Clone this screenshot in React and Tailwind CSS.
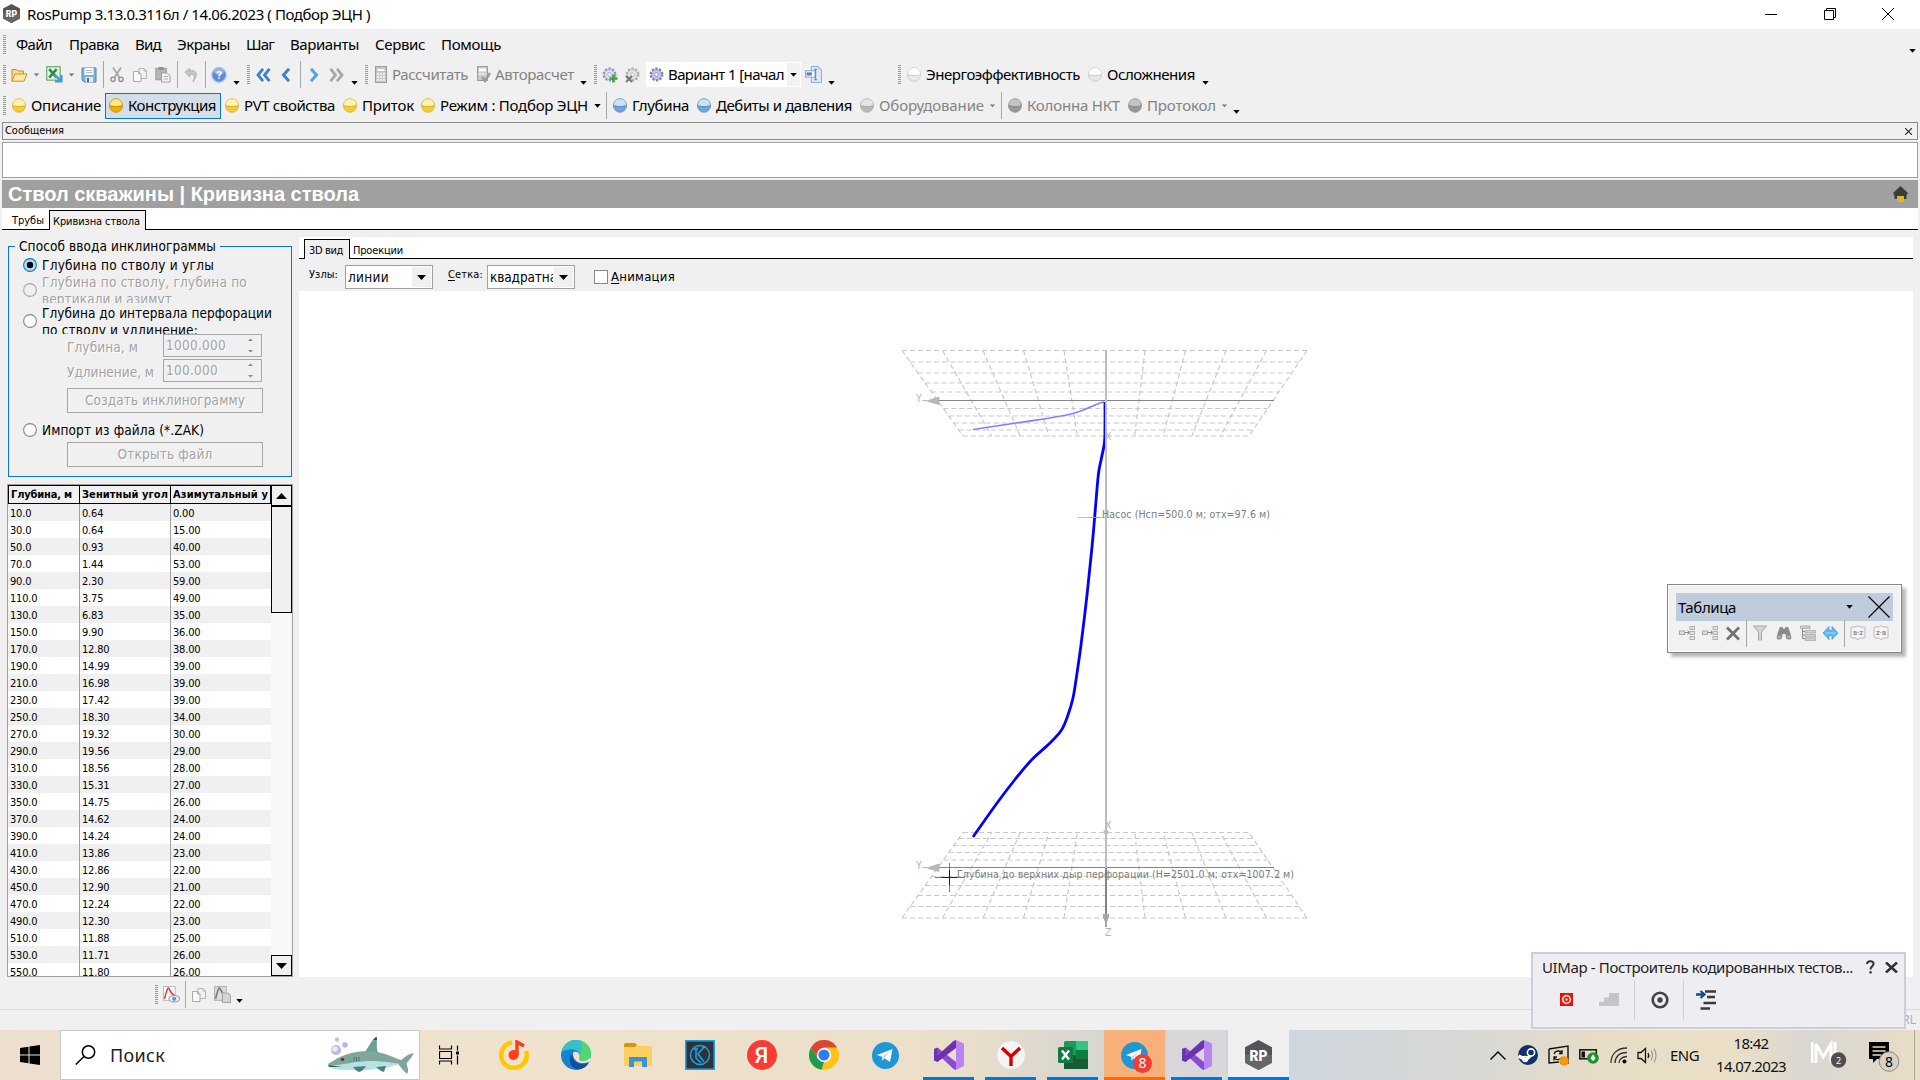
import React, { useLayoutEffect, useRef } from "react";

const UI = "font-['Noto_Sans','Open_Sans',sans-serif] text-[15px]";
const TAHOMA = "font-['DejaVu_Sans_Condensed','DejaVu_Sans',sans-serif]";

/* Text label whose tracking is adjusted so that it fills the width of its box. */
function Fit({ className = "", children }) {
  const outer = useRef(null);
  const inner = useRef(null);
  useLayoutEffect(() => {
    const el = inner.current;
    el.style.letterSpacing = "0px";
    const n = el.textContent.length;
    const spare = outer.current.clientWidth - el.getBoundingClientRect().width;
    el.style.letterSpacing = (spare / n).toFixed(3) + "px";
  });
  return (
    <span ref={outer} className={"block shrink-0 whitespace-nowrap " + className}>
      <span ref={inner} className="inline-block">{children}</span>
    </span>
  );
}

function Icon({ className = "", box = "0 0 16 16", children }) {
  return (
    <svg className={"block shrink-0 " + className} viewBox={box} fill="none">
      {children}
    </svg>
  );
}

const Grip = ({ className = "" }) => (
  <Icon className={"h-[20px] w-[3px] " + className} box="0 0 3 20">
    <path d="M1.5 0V20" stroke="#9a9a9a" strokeWidth="3" strokeDasharray="1 1" />
  </Icon>
);
const Sep = ({ className = "" }) => <div className={"h-[27px] w-px shrink-0 bg-[#a6a6a6] " + className} />;
const Arrow = ({ className = "" }) => (
  <Icon className={"h-[4px] w-[7px] " + className} box="0 0 7 4">
    <path d="M0.3 0H6.7L3.5 3.7Z" fill="currentColor" />
  </Icon>
);

const BALLS = {
  gold: ["#fff3b0", "#f3cb3c", "#d9a927"],
  dark: ["#ffe680", "#eeb100", "#b98700"],
  blue: ["#cfe3f8", "#6fa6de", "#5486bd"],
  gray: ["#e6e6e6", "#b9b9b9", "#a8a8a8"],
  deep: ["#c4c4c4", "#979797", "#8a8a8a"],
  white: ["#ffffff", "#e9e9e9", "#c4c4c4"],
};
function Ball({ tone, className = "" }) {
  const [a, b, c] = BALLS[tone];
  return (
    <Icon className={"h-[15px] w-[14px] " + className} box="0 0 14 15">
      <ellipse cx="7" cy="7.5" rx="6.5" ry="6.8" fill={b} stroke={c} strokeWidth="0.8" />
      <path d="M1 7.2C1 3 3.8 1.2 7 1.2S13 3 13 7.2C9 8.6 5 8.6 1 7.2Z" fill={a} />
      <path d="M1.2 7.6C5 9 9 9 12.8 7.6" stroke={c} strokeWidth="0.8" />
    </Icon>
  );
}

const Logo = ({ className }) => (
  <Icon className={className} box="0 0 27 30">
    <path d="M13.5 0L27 7.2V22.8L13.5 30L0 22.8V7.2Z" fill="#555" />
    <path d="M0 15H27V22.8L13.5 30L0 22.8Z" fill="#666" />
    <text x="13.5" y="20.5" textAnchor="middle" fontFamily="Roboto, sans-serif" fontWeight="900" fontSize="15.5" textLength="18" lengthAdjust="spacingAndGlyphs" fill="#fff">RP</text>
  </Icon>
);

function Gear({ className = "", color = "#8f93c4", light = "#dcdef2", badge }) {
  return (
    <Icon className={"h-[16px] w-[16px] " + className}>
      <circle cx="7.5" cy="7.5" r="5.8" stroke={color} strokeWidth="2.4" strokeDasharray="2.2 1.45" />
      <circle cx="7.5" cy="7.5" r="5" fill={light} stroke={color} strokeWidth="0.7" />
      <circle cx="7.5" cy="7.5" r="1.8" fill="#fff" stroke={color} strokeWidth="0.7" />
      {badge === "plus" && <path d="M11.5 7.5V15.5M7.5 11.5H15.5" stroke="#3fa535" strokeWidth="2.6" />}
      {badge === "x" && <path d="M1 9L7 15M7 9L1 15" stroke="#777" strokeWidth="2" />}
    </Icon>
  );
}

const Copy = ({ className = "" }) => (
  <Icon className={"h-[16px] w-[16px] " + className}>
    <path d="M7 1.5H12L14.5 4V11.5H7Z" fill="#f2f2f2" stroke="#b4b4b4" />
    <path d="M1.5 4.5H6.5L9 7V14.5H1.5Z" fill="#fafafa" stroke="#a8a8a8" />
    <path d="M6.5 4.5V7H9M12 1.5V4H14.5" stroke="#b4b4b4" />
  </Icon>
);

const Calc = ({ className = "" }) => (
  <Icon className={"h-[17px] w-[14px] " + className} box="0 0 14 17">
    <rect x="1.5" y="0.5" width="11" height="16" fill="#c9c9c9" stroke="#9c9c9c" />
    <rect x="3" y="2.5" width="8" height="3" fill="#fff" stroke="#aaa" strokeWidth="0.6" />
    <path d="M3.2 8H11M3.2 11H11M3.2 14H11" stroke="#fff" strokeWidth="1.7" strokeDasharray="1.8 1.1" />
  </Icon>
);

function TitleBar() {
  return (
    <div className={"flex h-[29px] items-center bg-white pb-[2px] text-black " + UI}>
      <Logo className="ml-[3px] h-[19px] w-[17px]" />
      <Fit className="ml-[7px] w-[343px] leading-[20px]">RosPump 3.13.0.3116л / 14.06.2023 ( Подбор ЭЦН )</Fit>
      <div className="flex-1" />
      <Icon className="h-[12px] w-[12px]" box="0 0 12 12"><path d="M0 6.5H12" stroke="#000" /></Icon>
      <Icon className="ml-[47px] h-[12px] w-[12px]" box="0 0 12 12"><path d="M0.5 2.5H9.5V11.5H0.5ZM2.5 2.5V0.5H11.5V9.5H9.5" stroke="#000" /></Icon>
      <Icon className="mr-[26px] ml-[46px] h-[12px] w-[12px]" box="0 0 12 12"><path d="M0 0L12 12M12 0L0 12" stroke="#000" /></Icon>
    </div>
  );
}

function MenuBar() {
  return (
    <div className={"flex h-[31px] items-center " + UI}>
      <Grip className="ml-[3px]" />
      <Fit className="ml-[10px] w-[36px]">Файл</Fit>
      <Fit className="ml-[17px] w-[50px]">Правка</Fit>
      <Fit className="ml-[16px] w-[26px]">Вид</Fit>
      <Fit className="ml-[16px] w-[53px]">Экраны</Fit>
      <Fit className="ml-[16px] w-[28px]">Шаг</Fit>
      <Fit className="ml-[16px] w-[69px]">Варианты</Fit>
      <Fit className="ml-[16px] w-[50px]">Сервис</Fit>
      <Fit className="ml-[16px] w-[60px]">Помощь</Fit>
      <Arrow className="mt-[13px] mr-[4px] ml-auto" />
    </div>
  );
}

function ToolRow() {
  return (
    <div className={"flex h-[29px] items-center " + UI}>
      <Grip className="ml-[3px]" />
      <Icon className="ml-[5px] h-[16px] w-[17px]">
        <path d="M0.5 14V2.5H5L6.5 4H12V7" fill="#f8dd86" stroke="#c39335" />
        <path d="M0.5 14.2L3.5 7H15.5L12.5 14.2Z" fill="#ffe9a3" stroke="#c39335" />
      </Icon>
      <Arrow className="ml-[5px] scale-90 text-[#777]" />
      <Icon className="ml-[6px] h-[17px] w-[17px]">
        <rect x="0.7" y="0.7" width="12.6" height="12.6" fill="#eaf5e8" stroke="#5c9a5c" />
        <path d="M3 3L10 11M10 3L3 11" stroke="#2e8b45" strokeWidth="2.4" />
        <path d="M8 8L13 13M14.5 8.5V14.5H8.5" stroke="#3d9be0" strokeWidth="2.2" />
      </Icon>
      <Arrow className="ml-[5px] scale-90 text-[#777]" />
      <Icon className="ml-[6px] h-[16px] w-[16px]">
        <path d="M1 1H15V15H3L1 13Z" fill="#7fb0e2" stroke="#5b83b4" />
        <rect x="3.5" y="1" width="9" height="7" fill="#f6f9fd" />
        <path d="M5 3.5H11M5 5.5H11" stroke="#b4bccb" />
        <rect x="4.5" y="10" width="7.5" height="5" fill="#e6eaf0" />
        <rect x="6" y="11" width="2" height="4" fill="#4c6d97" />
      </Icon>
      <Sep className="ml-[6px]" />
      <Icon className="ml-[5px] h-[17px] w-[16px]">
        <path d="M4 1L10.5 11M12 1L5.5 11" stroke="#a8a8a8" strokeWidth="1.8" />
        <circle cx="4" cy="12.8" r="2.1" stroke="#959595" strokeWidth="1.5" />
        <circle cx="12" cy="12.8" r="2.1" stroke="#959595" strokeWidth="1.5" />
      </Icon>
      <Copy className="ml-[7px]" />
      <Icon className="ml-[7px] h-[17px] w-[16px]">
        <rect x="0.8" y="1.8" width="10.5" height="11.5" fill="#b5b5b5" stroke="#9c9c9c" />
        <rect x="3.5" y="0.5" width="5" height="3" fill="#8f8f8f" />
        <path d="M6.5 6.5H12L15 9V15.5H6.5Z" fill="#f5f5f5" stroke="#a0a0a0" />
        <path d="M8.5 10H13M8.5 12.5H13" stroke="#b0b0b0" />
      </Icon>
      <Sep className="ml-[6px]" />
      <Icon className="ml-[6px] h-[16px] w-[15px]">
        <path d="M1 5L6 1V3.5C13 2 16 7 9.5 15.5C12.5 9.5 11 6.5 6 7.5V10Z" fill="#c6c6c6" stroke="#a6a6a6" strokeWidth="0.8" />
      </Icon>
      <Sep className="ml-[6px]" />
      <Icon className="ml-[5px] h-[16px] w-[16px]">
        <circle cx="8" cy="8" r="7.2" fill="#5f86dc" stroke="#a9bfe8" strokeWidth="1.4" />
        <ellipse cx="8" cy="4.8" rx="5" ry="3" fill="#94b0ee" />
        <text x="8" y="12" textAnchor="middle" fontFamily="Roboto, sans-serif" fontWeight="700" fontSize="11.5" fill="#fff">?</text>
      </Icon>
      <Arrow className="mt-[17px] ml-[6px]" />
      <Grip className="ml-[7px]" />
      <Icon className="ml-[6px] h-[14px] w-[15px]" box="0 0 15 14">
        <path d="M7 0.8L2 7L7 13.2M13.5 0.8L8.5 7L13.5 13.2" stroke="#3b82cf" strokeWidth="2.8" />
      </Icon>
      <Icon className="ml-[9px] h-[14px] w-[12px]" box="0 0 12 14"><path d="M9 0.8L3.5 7L9 13.2" stroke="#3b82cf" strokeWidth="3" /></Icon>
      <Sep className="ml-[8px]" />
      <Icon className="ml-[8px] h-[14px] w-[12px]" box="0 0 12 14"><path d="M2 0.8L7.5 7L2 13.2" stroke="#57a0e0" strokeWidth="3" /></Icon>
      <Icon className="ml-[8px] h-[14px] w-[15px]" box="0 0 15 14">
        <path d="M1.5 0.8L6.5 7L1.5 13.2M8 0.8L13 7L8 13.2" stroke="#a8a8a8" strokeWidth="2.8" />
      </Icon>
      <Arrow className="mt-[17px] ml-[7px]" />
      <Grip className="ml-[7px]" />
      <Calc className="ml-[6px]" />
      <Fit className="ml-[4px] w-[76px] text-[#838383]">Рассчитать</Fit>
      <Icon className="ml-[8px] h-[17px] w-[15px]" box="0 0 15 17">
        <rect x="1.5" y="0.5" width="10" height="14" fill="#c9c9c9" stroke="#9c9c9c" />
        <rect x="3" y="2.5" width="7" height="3" fill="#fff" />
        <path d="M3.2 8H10" stroke="#fff" strokeWidth="1.7" strokeDasharray="1.8 1" />
        <path d="M6 11L9 15L14 7" stroke="#9a9a9a" strokeWidth="2.4" />
      </Icon>
      <Fit className="ml-[4px] w-[79px] text-[#838383]">Авторасчет</Fit>
      <Arrow className="mt-[17px] ml-[6px]" />
      <Grip className="ml-[7px]" />
      <Gear className="ml-[5px]" badge="plus" />
      <Gear className="ml-[7px]" color="#aaa" light="#e2e2e2" badge="x" />
      <div className="ml-[5px] flex h-[25px] w-[155px] shrink-0 items-center bg-white">
        <Gear className="ml-[3px]" color="#7a7db8" light="#c3c6e6" />
        <Fit className="ml-[3px] w-[116px]">Вариант 1 [начал</Fit>
        <div className="ml-[3px] flex h-[23px] w-[13px] items-center justify-center bg-[#f2f2f2]">
          <Arrow />
        </div>
      </div>
      <Icon className="ml-[4px] h-[17px] w-[17px]">
        <path d="M6 0.5H12L15.5 4V15.5H6Z" fill="#dce9f7" stroke="#8fb3d8" />
        <rect x="0.5" y="4.5" width="9" height="6" fill="#fff" stroke="#8aa4c4" />
        <rect x="1.5" y="6" width="5" height="3" fill="#5b7fd0" />
        <path d="M10 3V13M8.500 3H11.5M8.500 13H11.5" stroke="#6f86a5" />
      </Icon>
      <Arrow className="mt-[17px] ml-[6px]" />
      <Grip className="ml-[63px]" />
      <Ball tone="white" className="ml-[6px]" />
      <Fit className="ml-[5px] w-[154px]">Энергоэффективность</Fit>
      <Ball tone="white" className="ml-[8px]" />
      <Fit className="ml-[5px] w-[88px]">Осложнения</Fit>
      <Arrow className="mt-[17px] ml-[7px]" />
    </div>
  );
}

function StepRow() {
  return (
    <div className={"flex h-[33px] items-center " + UI}>
      <Grip className="ml-[3px]" />
      <Ball tone="gold" className="ml-[6px]" />
      <Fit className="ml-[5px] w-[70px]">Описание</Fit>
      <div className="ml-[4px] flex h-[26px] w-[116px] shrink-0 items-center border border-[#0078d7] bg-[#d4dee8]">
        <Ball tone="dark" className="ml-[3px]" />
        <Fit className="ml-[5px] w-[88px]">Конструкция</Fit>
      </div>
      <Ball tone="gold" className="ml-[4px]" />
      <Fit className="ml-[5px] w-[91px]">PVT свойства</Fit>
      <Ball tone="gold" className="ml-[8px]" />
      <Fit className="ml-[5px] w-[52px]">Приток</Fit>
      <Ball tone="gold" className="ml-[7px]" />
      <Fit className="ml-[5px] w-[148px]">Режим : Подбор ЭЦН</Fit>
      <Arrow className="ml-[6px]" />
      <Sep className="ml-[5px]" />
      <Ball tone="blue" className="ml-[6px]" />
      <Fit className="ml-[5px] w-[57px]">Глубина</Fit>
      <Ball tone="blue" className="ml-[8px]" />
      <Fit className="ml-[5px] w-[136px]">Дебиты и давления</Fit>
      <Ball tone="gray" className="ml-[8px]" />
      <Fit className="ml-[5px] w-[105px] text-[#838383]">Оборудование</Fit>
      <Arrow className="ml-[5px] scale-90 text-[#838383]" />
      <Sep className="ml-[5px]" />
      <Ball tone="deep" className="ml-[6px]" />
      <Fit className="ml-[5px] w-[93px] text-[#838383]">Колонна НКТ</Fit>
      <Ball tone="deep" className="ml-[8px]" />
      <Fit className="ml-[5px] w-[69px] text-[#838383]">Протокол</Fit>
      <Arrow className="ml-[5px] scale-90 text-[#838383]" />
      <Arrow className="mt-[13px] ml-[5px]" />
    </div>
  );
}

function Messages() {
  return (
    <>
      <div className={"mx-[2px] flex h-[18px] items-center border border-[#8c8c8c] text-[11px] " + TAHOMA}>
        <Fit className="ml-[2px] w-[59px] pt-px">Сообщения</Fit>
        <Icon className="mr-[5px] ml-auto h-[7px] w-[7px]" box="0 0 7 7"><path d="M0 0L7 7M7 0L0 7" stroke="#222" strokeWidth="1.1" /></Icon>
      </div>
      <div className="mx-[2px] mt-[2px] h-[36px] border border-[#a0a0a0] bg-white" />
      <div className="mx-[2px] mt-[2px] flex h-[28px] items-center bg-[#a0a0a0] font-['Liberation_Sans',sans-serif] text-[20px] font-bold text-white">
        <Fit className="ml-[6px] w-[351px]">Ствол скважины | Кривизна ствола</Fit>
        <Icon className="mr-[10px] ml-auto h-[16px] w-[15px]" box="0 0 15 16">
          <path d="M7.5 0L15 7L13 10H2L0 7Z" fill="#3c3c3c" />
          <path d="M3 10L7.500 6L12 10L7.500 14Z" fill="#3c3c3c" />
          <rect x="4" y="10" width="7" height="6" fill="#e6b422" />
          <rect x="1.500" y="9" width="2.500" height="4" fill="#3c3c3c" />
          <rect x="11" y="9" width="2.500" height="4" fill="#3c3c3c" />
        </Icon>
      </div>
    </>
  );
}

function PageTabs() {
  return (
    <div className={"mx-[2px] flex h-[22px] items-end bg-white text-[11px] " + TAHOMA}>
      <div className="flex h-full w-[47px] shrink-0 items-center border-b border-black pt-[6px]">
        <Fit className="ml-[10px] w-[32px]">Трубы</Fit>
      </div>
      <div className="flex h-[20px] w-[97px] shrink-0 items-center border border-b-0 border-black bg-[#f0f0f0] pt-[4px]">
        <Fit className="ml-[3px] w-[87px]">Кривизна ствола</Fit>
      </div>
      <div className="h-full flex-1 border-b border-black" />
    </div>
  );
}

function Radio({ on, off, className = "" }) {
  return (
    <Icon className={"h-[14px] w-[14px] " + className} box="0 0 14 14">
      <circle cx="7" cy="7" r="6.4" fill={on ? "#b9dcf8" : off ? "#f0f0f0" : "#fff"} stroke={on ? "#0078d7" : off ? "#a8a8a8" : "#888"} strokeWidth="1.1" />
      {on && <circle cx="7" cy="7" r="3.2" fill="#000" />}
    </Icon>
  );
}

const OFF = "text-[#a3a3a3] [text-shadow:1px_1px_0_#fff]";

function NumberField({ value, width }) {
  return (
    <div className="flex h-[23px] w-[99px] items-center border border-[#a6a6a6]">
      <Fit className={"ml-[2px] " + width}>{value}</Fit>
      <Icon className="mr-[8px] ml-auto h-[15px] w-[5px]" box="0 0 5 15">
        <path d="M0 3L2.5 0.5L5 3ZM0 12L2.5 14.5L5 12Z" fill="#8a8a8a" />
      </Icon>
    </div>
  );
}

function InputMethod() {
  return (
    <fieldset className={"ml-[8px] h-[240px] w-[284px] border border-[#0078d7] text-[13.5px] " + TAHOMA}>
      <legend className="ml-[6px] h-[18px] px-[4px] leading-[18px]"><Fit className="w-[197px]">Способ ввода инклинограммы</Fit></legend>
      <div className="flex h-[19px] items-center">
        <Radio on className="ml-[14px]" />
        <Fit className="ml-[5px] w-[172px] pt-px">Глубина по стволу и углы</Fit>
      </div>
      <div className={"flex h-[29px] items-start overflow-hidden leading-[17px] " + OFF}>
        <Radio off className="mt-[9px] ml-[14px]" />
        <div className="ml-[5px]">
          <Fit className="w-[205px]">Глубина по стволу, глубина по</Fit>
          <Fit className="w-[130px]">вертикали и азимут</Fit>
        </div>
      </div>
      <div className="mt-px flex h-[30px] items-start overflow-hidden leading-[17px]">
        <Radio className="mt-[10px] ml-[14px]" />
        <div className="ml-[5px] pt-px">
          <Fit className="w-[230px]">Глубина до интервала перфорации</Fit>
          <Fit className="w-[156px]">по стволу и удлинение:</Fit>
        </div>
      </div>
      <div className={"flex h-[23px] items-center " + OFF}>
        <Fit className="ml-[58px] w-[71px] pt-[3px]">Глубина, м</Fit>
        <div className="ml-[25px]"><NumberField value="1000.000" width="w-[60px]" /></div>
      </div>
      <div className={"mt-[2px] flex h-[23px] items-center " + OFF}>
        <Fit className="ml-[58px] w-[87px] pt-[3px]">Удлинение, м</Fit>
        <div className="ml-[9px]"><NumberField value="100.000" width="w-[52px]" /></div>
      </div>
      <div className={"mt-[6px] ml-[58px] flex h-[25px] w-[196px] items-center justify-center border border-[#a6a6a6] " + OFF}>
        <Fit className="w-[160px]">Создать инклинограмму</Fit>
      </div>
      <div className="mt-[8px] flex h-[18px] items-center">
        <Radio className="ml-[14px]" />
        <Fit className="ml-[5px] w-[162px]">Импорт из файла (*.ZAK)</Fit>
      </div>
      <div className={"mt-[3px] ml-[58px] flex h-[25px] w-[196px] items-center justify-center border border-[#a6a6a6] " + OFF}>
        <Fit className="w-[95px]">Открыть файл</Fit>
      </div>
    </fieldset>
  );
}

const ROWS = [
  ["10.0", "0.64", "0.00"], ["30.0", "0.64", "15.00"], ["50.0", "0.93", "40.00"], ["70.0", "1.44", "53.00"],
  ["90.0", "2.30", "59.00"], ["110.0", "3.75", "49.00"], ["130.0", "6.83", "35.00"], ["150.0", "9.90", "36.00"],
  ["170.0", "12.80", "38.00"], ["190.0", "14.99", "39.00"], ["210.0", "16.98", "39.00"], ["230.0", "17.42", "39.00"],
  ["250.0", "18.30", "34.00"], ["270.0", "19.32", "30.00"], ["290.0", "19.56", "29.00"], ["310.0", "18.56", "28.00"],
  ["330.0", "15.31", "27.00"], ["350.0", "14.75", "26.00"], ["370.0", "14.62", "24.00"], ["390.0", "14.24", "24.00"],
  ["410.0", "13.86", "23.00"], ["430.0", "12.86", "22.00"], ["450.0", "12.90", "21.00"], ["470.0", "12.24", "22.00"],
  ["490.0", "12.30", "23.00"], ["510.0", "11.88", "25.00"], ["530.0", "11.71", "26.00"], ["550.0", "11.80", "26.00"],
];

function DepthTable() {
  return (
    <div className={"mt-[7px] ml-[7px] flex h-[493px] w-[286px] overflow-hidden border border-[#a0a0a0] bg-white text-[11px] " + TAHOMA}>
      <div className="w-[263px] shrink-0">
        <div className="flex h-[19px] items-center border border-black bg-[#f0f0f0] font-bold">
          <div className="flex h-full w-[71px] items-center border-r border-black pt-[2px]"><Fit className="ml-[2px] w-[61px]">Глубина, м</Fit></div>
          <div className="flex h-full w-[91px] items-center border-r border-black pt-[2px]"><Fit className="ml-[2px] w-[86px]">Зенитный угол</Fit></div>
          <Fit className="ml-[2px] w-[95px] pt-[2px]">Азимутальный у</Fit>
        </div>
        {ROWS.map((r, i) => (
          <div key={r[0]} className={"flex h-[17px] leading-[20px] tracking-[-0.2px] " + (i % 2 ? "bg-white" : "bg-[#f0f0f0]")}>
            <div className="w-[72px] border-r border-[#a0a0a0] pl-[2px]">{r[0]}</div>
            <div className="w-[91px] border-r border-[#a0a0a0] pl-[2px]">{r[1]}</div>
            <div className="w-[100px] pl-[2px]">{r[2]}</div>
          </div>
        ))}
      </div>
      <div className="flex w-[21px] flex-col bg-[#f8f8f8]">
        <div className="flex h-[21px] items-center justify-center border border-black bg-[#f0f0f0]">
          <Icon className="h-[6px] w-[11px]" box="0 0 11 6"><path d="M0 6L5.5 0L11 6Z" fill="#000" /></Icon>
        </div>
        <div className="h-[107px] border border-black bg-[#f0f0f0]" />
        <div className="mt-auto flex h-[21px] items-center justify-center border border-black bg-[#f0f0f0]">
          <Icon className="h-[6px] w-[11px]" box="0 0 11 6"><path d="M0 0L5.5 6L11 0Z" fill="#000" /></Icon>
        </div>
      </div>
    </div>
  );
}

function Combo({ children, className = "" }) {
  return (
    <div className={"flex h-[24px] w-[88px] shrink-0 items-center border border-[#a0a0a0] bg-white text-[13.5px] " + className}>
      {children}
      <div className="mr-px ml-auto flex h-[20px] w-[19px] items-center justify-center bg-[#f0f0f0]">
        <Icon className="h-[5px] w-[9px]" box="0 0 9 5"><path d="M0 0L4.5 5L9 0Z" fill="#000" /></Icon>
      </div>
    </div>
  );
}

const GRID_Y = [350.5, 362, 373, 383, 392, 408.5, 416, 423, 430, 436];
const GRID_K = [0, 1, 2, 3, 4, 6, 7, 8, 9, 10];

function Grid({ flip }) {
  const fy = (y) => (flip ? 1268.5 - y : y);
  return (
    <g stroke="#c9c9c9" strokeWidth="1.2" strokeDasharray="5 3">
      {GRID_Y.map((y) => {
        const t = (y - 350.5) / 85.5;
        return <path key={y} d={`M${902 + 61 * t} ${fy(y)}H${1307 - 58 * t}`} />;
      })}
      {GRID_K.map((k) => (
        <path key={k} d={`M${902 + 40.5 * k} ${fy(350.5)}L${963 + 28.6 * k} ${fy(436)}`} />
      ))}
    </g>
  );
}

/* Well path stations in screen space, drawn as a smooth curve through each. */
const WELL = [
  [1105, 402], [1105, 425], [1104.5, 442], [1101.5, 458], [1098.3, 475], [1094.7, 517], [1091.7, 550],
  [1087, 595], [1081, 645], [1076, 680], [1073, 698], [1068, 715], [1061.5, 730], [1050, 743],
  [1031.5, 760], [1015, 779.5], [996.7, 803.5], [973, 837],
];
const smooth = (p) => {
  let d = `M${p[0][0]} ${p[0][1]}`;
  for (let i = 0; i < p.length - 1; i++) {
    const a = p[i - 1] || p[i];
    const b = p[i];
    const c = p[i + 1];
    const e = p[i + 2] || c;
    d += `C${b[0] + (c[0] - a[0]) / 6} ${b[1] + (c[1] - a[1]) / 6} ${c[0] - (e[0] - b[0]) / 6} ${c[1] - (e[1] - b[1]) / 6} ${c[0]} ${c[1]}`;
  }
  return d;
};

function Trajectory() {
  return (
    <svg className="block h-[686px] w-[1614px] bg-white" viewBox="299 291 1614 686" fill="none" fontFamily="'DejaVu Sans Condensed','DejaVu Sans',sans-serif" fontSize="10.5">
      <Grid />
      <Grid flip />
      <path d="M938 400.5H1274M938 867.5H1274" stroke="#858585" />
      <path d="M1104 402C1096 403 1090 409 1073 413.5C1055 418 1035 420 1016 423L973 429.5" stroke="#8080ff" strokeWidth="1.7" />
      <path d={smooth(WELL)} stroke="#0000ff" strokeWidth="2.8" />
      <path d="M1106 350V925" stroke="#bdbdbd" strokeWidth="2" />
      <path d="M1106 868V915" stroke="#858585" strokeWidth="2" />
      <path d="M922 400.5H928L939 397V404.5L928 401.5M922 867.5H928L939 864V871.5L928 868.5" fill="#b8b8b8" stroke="#aaa" strokeWidth="0.6" />
      <path d="M1103 914H1109V917L1107 922V927H1105V922L1103 917Z" fill="#a6a6a6" />
      <circle cx="1106" cy="832" r="2.5" fill="#bdbdbd" />
      <g fill="#b4b4b4">
        <text x="916" y="402">Y</text>
        <text x="916" y="869">Y</text>
        <text x="1105" y="440">X</text>
        <text x="1105" y="829">X</text>
        <text x="1105" y="936">Z</text>
      </g>
      <path d="M1078 517.5H1111" stroke="#f7b27a" />
      <path d="M1090 517.5H1100" stroke="#ff8020" />
      <path d="M935 877.5H965M949.5 863V892" stroke="#777" />
      <path d="M942 877.5H957M949.5 870V885" stroke="#222" />
      <g fill="#7c7c7c">
        <text x="1102" y="518" textLength="168">Насос (Нсп=500.0 м; отх=97.6 м)</text>
        <text x="957" y="878" textLength="337">Глубина до верхних дыр перфорации (Н=2501.0 м; отх=1007.2 м)</text>
      </g>
    </svg>
  );
}

function ViewPanel() {
  return (
    <div className={"w-[1614px] pt-[7px] text-[11px] " + TAHOMA}>
      <div className="flex h-[22px] items-end bg-white">
        <div className="h-full w-[5px] border-b border-black" />
        <div className="flex h-[20px] w-[46px] items-center border border-b-0 border-black bg-[#f0f0f0] pt-[4px]">
          <Fit className="ml-[4px] w-[34px]">3D вид</Fit>
        </div>
        <div className="flex h-full flex-1 items-center border-b border-black pt-[7px]">
          <Fit className="ml-[3px] w-[50px]">Проекции</Fit>
        </div>
      </div>
      <div className="flex h-[32px] items-center pt-[4px]">
        <Fit className="ml-[10px] w-[29px] pb-[3px]">Узлы:</Fit>
        <Combo className="ml-[7px]"><Fit className="ml-[2px] w-[41px]">линии</Fit></Combo>
        <Fit className="ml-[15px] w-[35px] pb-[3px]"><span className="underline underline-offset-2">С</span>етка:</Fit>
        <Combo className="ml-[4px]">
          <div className="ml-[2px] w-[63px] overflow-hidden"><Fit className="w-[67px]">квадратна</Fit></div>
        </Combo>
        <div className="ml-[19px] h-[14px] w-[14px] border border-[#888] bg-white" />
        <Fit className="ml-[3px] w-[64px] text-[13px]"><span className="underline underline-offset-2">А</span>нимация</Fit>
      </div>
      <Trajectory />
    </div>
  );
}

function BottomBar() {
  return (
    <>
      <div className="flex h-[33px] items-center border-b border-[#d9d9d9] pt-[3px]">
        <Grip className="ml-[155px] h-[15px]" />
        <Icon className="ml-[5px] h-[17px] w-[17px]">
          <rect x="0.5" y="0.5" width="11" height="13" fill="#fff" stroke="#bbb" />
          <path d="M1.5 12C4 1 5 1 6 3S8 8 11 9" stroke="#e8343a" strokeWidth="1.4" />
          <ellipse cx="10.5" cy="12" rx="5" ry="3" fill="#e8f2fb" stroke="#8e9eaa" />
          <circle cx="10.5" cy="12" r="2" fill="#5b9ad6" />
        </Icon>
        <Sep className="ml-[5px] h-[22px]" />
        <Copy className="ml-[5px]" />
        <Icon className="ml-[7px] h-[17px] w-[17px]">
          <rect x="0.5" y="0.5" width="11" height="13" fill="#dcdcdc" stroke="#b0b0b0" />
          <path d="M1.5 12C4 1 5 1 6 3S8 8 11 9" stroke="#777" strokeWidth="1.4" />
          <path d="M8 6.5H13L15.5 9V15.5H8Z" fill="#d5d5d5" stroke="#a6a6a6" />
        </Icon>
        <Arrow className="mt-[13px] ml-[5px]" />
      </div>
      <div className={"flex h-[20px] items-center justify-end pr-[4px] text-[#aab] " + UI}>
        <span className="text-[12px]">RL</span>
      </div>
    </>
  );
}

function TableWindow() {
  return (
    <div className="absolute top-[584px] left-[1667px] h-[69px] w-[235px] border border-[#858585] bg-[#f1f1f1] px-[8px] pt-[8px] shadow-[4px_4px_3px_rgba(0,0,0,0.28),inset_0_0_0_1px_#fff]">
      <div className={"flex h-[28px] items-center bg-[#bfccdb] " + UI}>
        <Fit className="ml-[2px] w-[58px]">Таблица</Fit>
        <Arrow className="ml-[110px]" />
        <Icon className="ml-[15px] h-[22px] w-[22px]" box="0 0 22 22"><path d="M0.5 0.5L21.5 21.5M21.5 0.5L0.5 21.5" stroke="#000" strokeWidth="1.2" /></Icon>
      </div>
      <div className="flex h-[24px] items-center">
        {[0, 1].map((k) => (
          <Icon key={k} className={"h-[16px] w-[16px] " + (k ? "ml-[7px]" : "ml-[3px]")}>
            <rect x="0.5" y="6" width="5" height="3.5" fill="#e0e0e0" stroke="#a8a8a8" />
            <path d="M6 7.5H10M8.5 5.5L10.5 7.5L8.5 9.5" stroke="#888" />
            <rect x="11" y="1.5" width="4.5" height="3" fill="#e2e2e2" stroke="#b0b0b0" />
            <rect x="11" y="6.5" width="4.5" height="3" fill="#e2e2e2" stroke="#b0b0b0" />
            <rect x="11" y="11.5" width="4.5" height="3" fill="#e2e2e2" stroke="#b0b0b0" />
          </Icon>
        ))}
        <Icon className="ml-[7px] h-[17px] w-[16px]"><path d="M2 2L14 14M14 2L2 14" stroke="#707070" strokeWidth="2.6" /></Icon>
        <Sep className="ml-[5px] h-[22px]" />
        <Icon className="ml-[6px] h-[16px] w-[14px]" box="0 0 14 16"><path d="M0.5 1H13.5L8.5 7V15H5.5V7Z" fill="#d4d4d4" stroke="#a5a5a5" /></Icon>
        <Icon className="ml-[9px] h-[16px] w-[16px]">
          <path d="M4 2H6.5L7.5 4H8.5L9.5 2H12L14 7L15.5 13Q15 14.5 13 14.5Q11 14.5 10 13L9.5 9H6.500L6 13Q5 14.5 3 14.5Q1 14.5 0.5 13L2 7Z" fill="#8b8b8b" />
          <path d="M1.500 12.500Q3 10.500 5 12.500M11 12.500Q13 10.500 14.500 12.500" stroke="#ddd" />
        </Icon>
        <Icon className="ml-[8px] h-[16px] w-[16px]">
          <path d="M2.500 3V13.500H5M2.500 6.500H5M2.500 10H5" stroke="#888" />
          <path d="M0.500 1H10V3.500H0.500ZM5 5.500H15.500V8H5ZM5 9.500H15.500V12H5ZM5 13H15.500V15.500H5Z" fill="#d0d0d0" stroke="#a0a0a0" strokeWidth="0.7" />
        </Icon>
        <Icon className="ml-[6px] h-[16px] w-[17px]">
          <path d="M0.500 8L6.500 1.500V5.500H9.500V1.500L15.500 8L9.500 14.500V10.500H6.500V14.500Z" fill="#5fb8ee" stroke="#4a9cd6" strokeWidth="0.8" />
          <path d="M3 8H13" stroke="#a5dcfa" />
        </Icon>
        <Sep className="ml-[5px] h-[22px]" />
        {["a·z", "z·a"].map((s, i) => (
          <Icon key={s} className={"h-[16px] w-[16px] " + (i ? "ml-[7px]" : "ml-[5px]")}>
            <path d="M1 3Q1 2 2 2H6L8 0.500L10 2H14Q15 2 15 3V12Q15 13 14 13H10L8 15L6 13H2Q1 13 1 12Z" fill="#f4f4f4" stroke="#b8b8b8" />
            <text x="8" y="10" textAnchor="middle" fontFamily="Roboto, sans-serif" fontWeight="700" fontSize="7.5" fill="#8c8c8c">{s}</text>
          </Icon>
        ))}
      </div>
    </div>
  );
}

function TestBuilder() {
  return (
    <div className="absolute top-[952px] left-[1531px] h-[77px] w-[375px] border-2 border-[#cccedb] bg-[#eeeef2]">
      <div className={"flex h-[26px] items-center text-[#1e1e1e] " + UI}>
        <Fit className="ml-[9px] w-[311px]">UIMap - Построитель кодированных тестов...</Fit>
        <Icon className="ml-[13px] h-[14px] w-[9px]" box="0 0 9 14">
          <path d="M1 4C1.3 0 8 0.5 7.5 4.2C7.2 6.200 4.5 6.5 4.5 9.5" stroke="#333" strokeWidth="2" />
          <rect x="3.4" y="11.2" width="2.3" height="2.3" fill="#333" />
        </Icon>
        <Icon className="ml-[10px] h-[11px] w-[13px]" box="0 0 13 11"><path d="M1 0.5L12 10.5M12 0.5L1 10.5" stroke="#333" strokeWidth="2.6" /></Icon>
      </div>
      <div className="flex h-[40px] items-center pb-px">
        <Icon className="ml-[27px] h-[13px] w-[13px]" box="0 0 13 13"><rect width="13" height="13" fill="#e51400" /><circle cx="6.5" cy="6.5" r="3.8" stroke="#f6d5d5" strokeWidth="1.8" /><circle cx="6.5" cy="6.5" r="1.3" fill="#f6d5d5" /></Icon>
        <Icon className="ml-[26px] h-[13px] w-[20px]" box="0 0 20 13"><path d="M0 9H5V4.5H10V0H20V13H0Z" fill="#c5c5c8" /></Icon>
        <div className="ml-[15px] h-[40px] w-px bg-[#cccedb]" />
        <Icon className="ml-[16px] h-[18px] w-[18px]" box="0 0 18 18"><circle cx="9" cy="9" r="7.3" stroke="#424242" strokeWidth="2.6" /><circle cx="9" cy="9" r="2.7" fill="#424242" /></Icon>
        <div className="ml-[14px] h-[40px] w-px bg-[#cccedb]" />
        <Icon className="ml-[12px] h-[20px] w-[20px]" box="0 0 20 20">
          <path d="M9 1.5H20M11 7H19M7.5 13H20M4.5 18.5H14" stroke="#3a3a3a" strokeWidth="2.4" />
          <path d="M0 4.500H8M4.500 1L8.500 4.500L4.500 8" stroke="#00539c" strokeWidth="2.3" />
        </Icon>
      </div>
    </div>
  );
}

const Telegram = ({ className = "" }) => (
  <Icon className={"h-[27px] w-[27px] " + className} box="0 0 27 27">
    <circle cx="13.5" cy="13.5" r="13.5" fill="#1f97d4" />
    <path d="M5 13L20.5 7L18 20L12.5 16.2L10.5 18.5L10 14.8Z" fill="#fff" />
    <path d="M10 14.8L17.5 9.5L12.5 16.2L10.5 18.5Z" fill="#c5dff0" />
  </Icon>
);
const Studio = ({ className = "" }) => (
  <Icon className={"h-[30px] w-[30px] " + className} box="0 0 30 30">
    <path d="M0 9L3.5 7.5L22 22V30L19.5 29L3.5 14V21.5L0 20.5Z" fill="#8a4bd0" />
    <path d="M0 20.5L3.5 22L22 8V0L19.5 1L3.5 15.5V8L0 9Z" fill="#6c33af" />
    <path d="M22 0L30 3.5V26L22 30Z" fill="#b784f2" />
  </Icon>
);

function Shark() {
  return (
    <Icon className="h-[38px] w-[87px]" box="0 0 87 38">
      <circle cx="8" cy="14" r="5" fill="#bcb4e6" /><circle cx="7" cy="13" r="2.8" fill="#dff0fb" />
      <circle cx="9" cy="3.5" r="2.2" fill="#b9c9ee" /><circle cx="17" cy="9" r="2.8" fill="#b9b5e8" />
      <path d="M36 17C41 11 44 3 48.5 1C50 7 47 12 51 18Z" fill="#6c9f98" />
      <path d="M45 4L48.5 0.5L49 4Z" fill="#2c4c52" />
      <path d="M0 28C12 20 24 15 40 15C54 15 66 22 73 24C77 21 80 18 86 17C83 23 79 26 78.5 28C80 32 81 35 79 38C75 35 73 31 70 28C56 33 38 34 22 33C12 33 3 33 0 28Z" fill="#7fa59c" />
      <path d="M1 30C14 29 28 25 42 25C56 25 64 27 71 27.5C58 33 38 35 22 34C12 34 4 34 1 30Z" fill="#b5e3e2" />
      <path d="M25 31L38 30C36 33 33 36 31 36C28 35 27 33 25 31ZM48 31L58 30L56 36L53 35Z" fill="#4e7f80" />
      <path d="M0 29L14 31L1 31Z" fill="#3a5d62" />
      <circle cx="14.5" cy="23.5" r="1.8" fill="#742d3c" />
      <path d="M26 21V25M28.5 21V25M31 21V25" stroke="#4d7777" />
    </Icon>
  );
}

function Taskbar() {
  return (
    <div className={"flex h-[50px] items-center bg-[linear-gradient(90deg,#ecdfcd_0px,#efe3ce_500px,#ecdfca_950px,#dcd8ce_1050px,#d2d4d8_1160px,#cfd6de_1300px,#d8d8d4_1480px,#e7ddc6_1600px,#ebe0c6_1730px,#d9d7d2_1810px,#e0dacc_1870px,#eadec2_1920px)] " + UI}>
      <Icon className="ml-[20px] h-[20px] w-[20px]" box="0 0 20 20"><path d="M0 3L8.5 1.8V9.5H0ZM9.5 1.6L20 0V9.5H9.5ZM0 10.5H8.5V18.2L0 17ZM9.5 10.5H20V20L9.500 18.400Z" fill="#000" /></Icon>
      <div className="ml-[20px] flex h-[50px] w-[360px] shrink-0 items-center border border-[#c8c8c8] bg-white">
        <Icon className="ml-[14px] h-[20px] w-[21px]" box="0 0 21 20"><circle cx="13.5" cy="7" r="6.2" stroke="#000" strokeWidth="1.5" /><path d="M9 11.500L0.800 19.500" stroke="#000" strokeWidth="1.5" /></Icon>
        <Fit className="ml-[14px] w-[55px] text-[18px] text-[#222]">Поиск</Fit>
        <div className="mr-[4px] ml-auto"><Shark /></div>
      </div>
      <Icon className="ml-[19px] h-[20px] w-[21px]" box="0 0 21 19"><path d="M0.500 0V3.500H12.500V0M0.500 19V15.500H12.500V19M0.500 6H12.500V13H0.500ZM18.500 0V5M18.500 10V19" stroke="#000" strokeWidth="1.2" /><rect x="17" y="6" width="3" height="3" fill="#000" /></Icon>
      <Icon className="ml-[39px] h-[30px] w-[30px]" box="0 0 30 30">
        <path d="M13 2.5A12.8 12.8 0 1 0 27 11" stroke="#fdc800" strokeWidth="4.5" />
        <circle cx="14.5" cy="15" r="5" fill="#fb3f1c" /><path d="M18 15V2L25 6" stroke="#fb3f1c" strokeWidth="3.5" />
      </Icon>
      <Icon className="ml-[32px] h-[30px] w-[30px]" box="0 0 30 30">
        <circle cx="15" cy="15" r="15" fill="#1683d0" />
        <path d="M0.5 12C3 3 10 0 15 0C24 0 30 7 30 14C30 19 26 21.5 21 21C17 20.5 18.5 18 18.5 15C18 9 8 7 0.5 12Z" fill="#35c1c9" />
        <path d="M20 1C27 3 30 9 30 14C30 19 26 21.5 21 21C17 20.5 18.5 18 18.5 15C21 12 22 6 20 1Z" fill="#53d76d" />
        <path d="M11 14C6 20 10 29 18 29.5C22 29 25 27 27.5 23C20 26 12 23 11 14Z" fill="#104f9c" />
        <path d="M12 12.5C11.5 22 20 25 28 22L30 20L29 17C27 21 23 21.500 20.500 21C17 20.500 18.500 18 18.500 15C17.500 11.500 13.500 11 12 12.500Z" fill="#efe3ce" />
      </Icon>
      <Icon className="ml-[33px] h-[24px] w-[28px]" box="0 0 28 24">
        <path d="M0 2Q0 0 2 0H11L14 3H26Q28 3 28 5V23H0Z" fill="#fbd05c" /><path d="M0 2Q0 0 2 0H11L13 2L11 4H0Z" fill="#d9950d" />
        <path d="M5 24V14H23V24H18V18.5H10V24Z" fill="#3a92db" />
      </Icon>
      <Icon className="ml-[33px] h-[30px] w-[30px]" box="0 0 30 30">
        <rect x="0.8" y="0.8" width="28.4" height="28.4" fill="#303336" stroke="#17a1e6" strokeWidth="1.6" />
        <circle cx="15" cy="15" r="9.5" stroke="#17a1e6" strokeWidth="1.5" /><path d="M11 8V18L16 23M19 7L13 14L19 22M8 9H13M17 7H21" stroke="#17a1e6" strokeWidth="1.6" />
      </Icon>
      <Icon className="ml-[32px] h-[30px] w-[30px]" box="0 0 30 30"><circle cx="15" cy="15" r="15" fill="#fc3a36" /><text x="14.5" y="23" textAnchor="middle" fontFamily="Roboto, sans-serif" fontSize="22" fontWeight="500" fill="#fff">Я</text></Icon>
      <Icon className="ml-[32px] h-[30px] w-[30px]" box="0 0 30 30">
        <circle cx="15" cy="15" r="15" fill="#fcc419" /><path d="M2 7.5A15 15 0 0 1 28 7.5H15L9 18Z" fill="#db4437" />
        <path d="M2 7.5L9 18.5L15 22L12.5 29.8A15 15 0 0 1 2 7.5Z" fill="#1e9b4c" />
        <circle cx="15" cy="15" r="7.2" fill="#fff" /><circle cx="15" cy="15" r="5.6" fill="#2f7df0" />
      </Icon>
      <Telegram className="ml-[33px]" />
      <div className="ml-[24px] flex h-full w-[51px] shrink-0 items-center justify-center border-b-[3px] border-[#0078d7]"><Studio className="mt-[3px]" /></div>
      <div className="ml-[11px] flex h-full w-[51px] shrink-0 items-center justify-center border-b-[3px] border-[#0078d7]">
        <Icon className="mt-[3px] h-[30px] w-[30px]" box="0 0 30 30"><circle cx="15" cy="15" r="14.5" fill="#f4f4f4" stroke="#ddd" /><path d="M6 8L15 16.5L24 8M15 16V26" stroke="#d40000" strokeWidth="3.4" /></Icon>
      </div>
      <div className="ml-[11px] flex h-full w-[51px] shrink-0 items-center justify-center border-b-[3px] border-[#0078d7]">
        <Icon className="mt-[3px] h-[28px] w-[30px]" box="0 0 30 28">
          <rect x="6" width="24" height="28" rx="1.5" fill="#1a9b5a" /><rect x="18" width="12" height="9" fill="#33c481" /><rect x="6" y="14" width="12" height="14" fill="#185c37" /><rect x="18" y="18" width="12" height="10" fill="#185c37" /><rect x="18" y="9" width="12" height="9" fill="#107c41" />
          <rect y="6" width="15" height="16" rx="1.5" fill="#107c41" /><path d="M4 9.5L11 18.5M11 9.5L4 18.5" stroke="#fff" strokeWidth="2.4" />
        </Icon>
      </div>
      <div className="ml-[6px] flex h-full w-[61px] shrink-0 items-center justify-center border-b-[3px] border-[#ff6a00] bg-[#f8b07b]">
        <div className="relative mt-[3px]">
          <Telegram />
          <div className="absolute top-[12px] left-[12px] flex h-[19px] w-[19px] items-center justify-center rounded-full bg-[#f23c34] text-[14px] leading-none text-white">8</div>
        </div>
      </div>
      <div className="ml-[2px] flex h-full w-[59px] shrink-0 flex-col items-center justify-between bg-[#d8d8db]">
        <Studio className="mt-[10px]" /><div className="h-[3px] w-[51px] bg-[#0078d7]" />
      </div>
      <div className="ml-[2px] flex h-full w-[61px] shrink-0 items-center justify-center border-b-[3px] border-[#0078d7] bg-[#efeff1]"><Logo className="mt-[3px] h-[30px] w-[27px]" /></div>
      <Icon className="ml-[201px] h-[9px] w-[16px]" box="0 0 16 9"><path d="M0.5 8.5L8 1L15.5 8.5" stroke="#000" strokeWidth="1.4" /></Icon>
      <Icon className="ml-[12px] h-[20px] w-[20px]" box="0 0 20 20"><circle cx="10" cy="10" r="10" fill="#12316b" /><path d="M0.5 11L8 14.5L12 11" stroke="#fff" strokeWidth="3.5" /><circle cx="13" cy="7.5" r="3.6" fill="#12316b" stroke="#fff" strokeWidth="1.6" /><circle cx="7" cy="14" r="2.6" stroke="#fff" strokeWidth="1.3" /></Icon>
      <Icon className="ml-[10px] h-[21px] w-[21px]" box="0 0 21 21">
        <path d="M1 4L20 1V18H12M1 4V18L11 17" stroke="#111" strokeWidth="1.4" />
        <path d="M6 9A4.5 4.5 0 0 1 14 8M14 5V8.5H11M14 12A4.500 4.500 0 0 1 6 12.500M6 15.500V12H9" stroke="#111" strokeWidth="1.3" />
        <circle cx="16" cy="16" r="4.7" fill="#ff9500" />
      </Icon>
      <Icon className="ml-[10px] h-[18px] w-[20px]" box="0 0 20 18"><rect x="0.8" y="3.8" width="16.5" height="9" stroke="#111" strokeWidth="1.5" /><rect x="2.5" y="5.5" width="3.5" height="6" fill="#111" /><circle cx="14" cy="12" r="5.8" fill="#13962a" /><path d="M14 8.5L16.5 12L15 14.5H13L11.5 12Z" fill="#fff" /></Icon>
      <Icon className="ml-[11px] h-[17px] w-[18px]" box="0 0 18 17"><path d="M1 16C1 7 7 1 17 1M5 16C5 10 9 5.5 17 5.5M9 16C9 12.5 12 9.5 17 9.5" stroke="#333" strokeWidth="1.3" /><circle cx="14.5" cy="14.5" r="2" fill="#000" /></Icon>
      <Icon className="ml-[9px] h-[17px] w-[20px]" box="0 0 20 17"><path d="M1 5.5H4L8.5 1.5V15.5L4 11.5H1Z" stroke="#111" strokeWidth="1.3" /><path d="M11 6Q12.5 8.5 11 11" stroke="#111" strokeWidth="1.3" /><path d="M14 3.5Q17 8.5 14 13.5M17 1.5Q21 8.5 17 15.5" stroke="#999" strokeWidth="1.2" /></Icon>
      <Fit className="ml-[13px] w-[29px] text-[#111]">ENG</Fit>
      <div className="ml-[17px] flex w-[70px] shrink-0 flex-col items-center leading-[23px] text-[#111]">
        <Fit className="w-[35px]">18:42</Fit>
        <Fit className="w-[70px]">14.07.2023</Fit>
      </div>
      <Icon className="ml-[25px] h-[28px] w-[36px]" box="0 0 36 28">
        <path d="M1 1V22M5 22V3L12 16L20 3V22M24 1V22H28" stroke="#fff" strokeWidth="3" />
        <circle cx="27.5" cy="19" r="7.7" fill="#4f4f4f" /><text x="27.5" y="22.5" textAnchor="middle" fontFamily="'Noto Sans',sans-serif" fontSize="9" fill="#fff">2</text>
      </Icon>
      <Icon className="mt-[4px] ml-[22px] h-[32px] w-[31px]" box="0 0 31 32">
        <path d="M0 1H20V18H8L4 22V18H0Z" fill="#000" /><path d="M3.5 6H16.5M3.5 10H16.5M3.5 14H12" stroke="#e8dcc5" strokeWidth="1.5" />
        <circle cx="20" cy="20.5" r="9.8" fill="#d6d2c8" stroke="#888" /><text x="20" y="25.5" textAnchor="middle" fontFamily="'Noto Sans',sans-serif" fontSize="14" fill="#000">8</text>
      </Icon>
      <div className="mr-[5px] ml-auto h-full w-px bg-[#a9a393]" />
    </div>
  );
}

export default function App() {
  return (
    <div className="relative flex h-[1080px] w-[1920px] flex-col overflow-hidden bg-[#f0f0f0] text-black">
      <TitleBar />
      <MenuBar />
      <ToolRow />
      <StepRow />
      <Messages />
      <PageTabs />
      <div className="flex h-[747px]">
        <div className="w-[299px] shrink-0 pt-[7px]">
          <InputMethod />
          <DepthTable />
        </div>
        <ViewPanel />
      </div>
      <BottomBar />
      <Taskbar />
      <TableWindow />
      <TestBuilder />
    </div>
  );
}
